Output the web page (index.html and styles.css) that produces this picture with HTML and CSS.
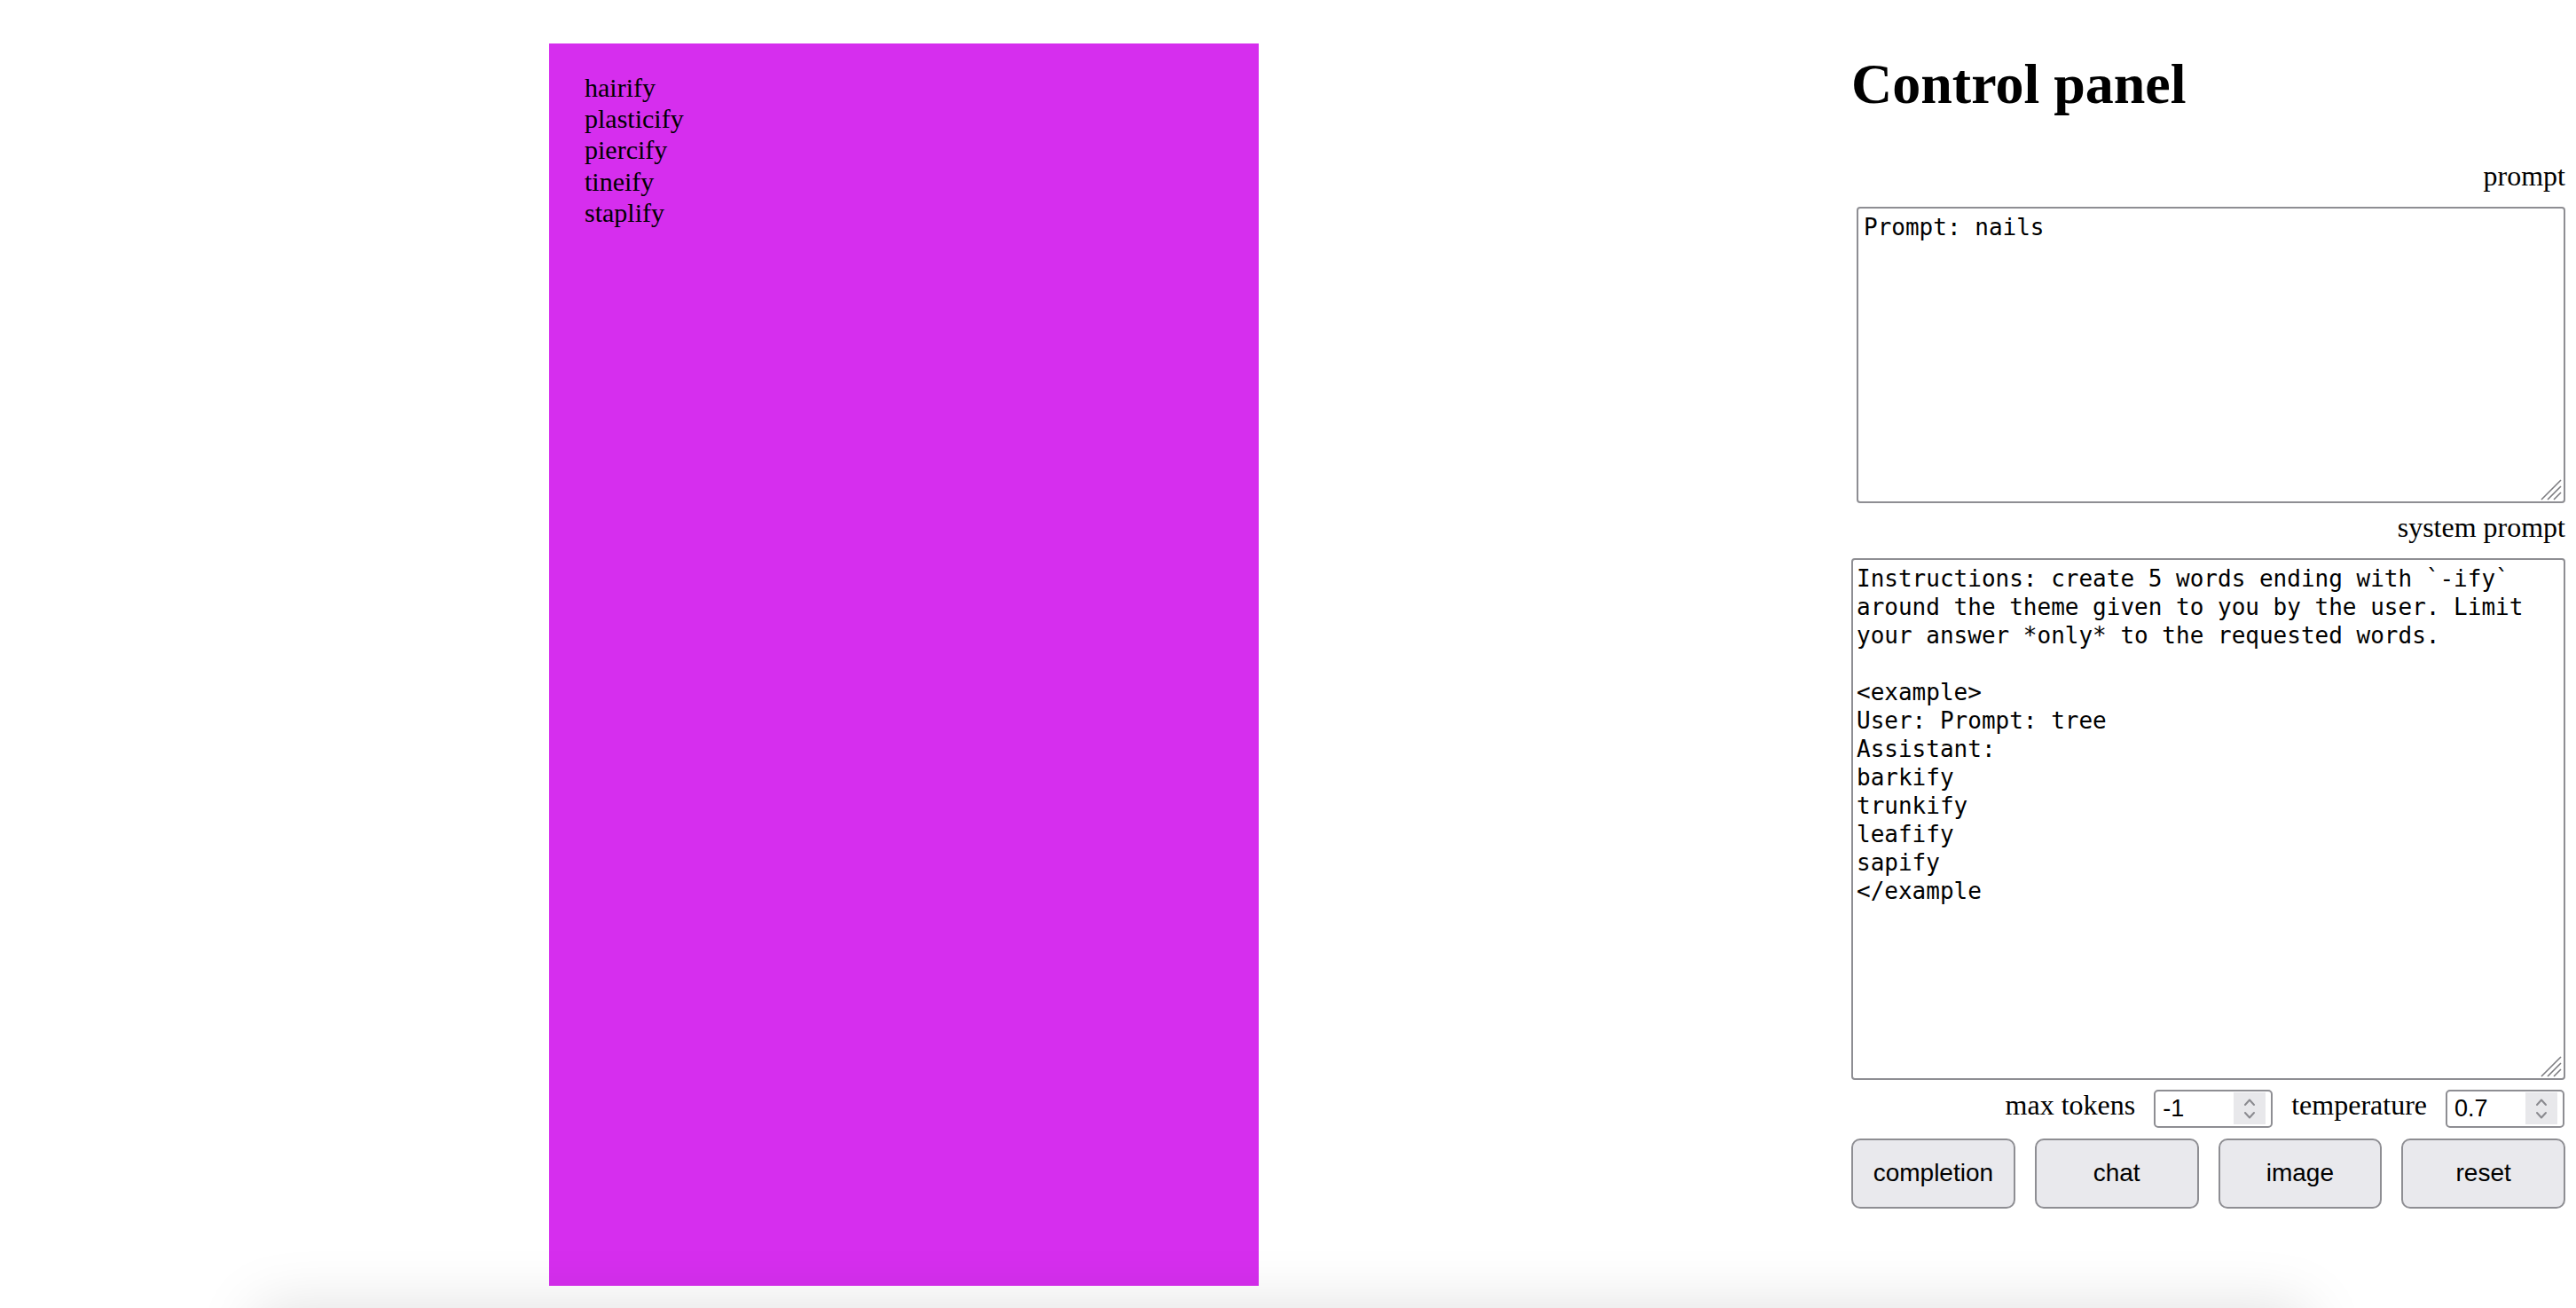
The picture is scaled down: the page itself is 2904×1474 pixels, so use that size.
FILE: index.html
```html
<!DOCTYPE html>
<html lang="en">
<head>
<meta charset="utf-8">
<title>Control panel</title>
<link rel="stylesheet" href="styles.css">
</head>
<body>
<div class="page">
  <div class="canvas">
    <div class="words">hairify<br>plasticify<br>piercify<br>tineify<br>staplify</div>
  </div>
  <div class="panel">
    <h1 class="title">Control panel</h1>
    <label class="field-label label-prompt" for="prompt">prompt</label>
    <div class="ta-wrap ta-prompt">
      <textarea id="prompt" class="ta ta-p">Prompt: nails</textarea>
      <svg class="grip" width="24" height="24" viewBox="0 0 24 24"><path d="M1 23L23 1M8 23L23 8M15 23L23 15" stroke="#7c7c80" stroke-width="1.6" fill="none"/></svg>
    </div>
    <label class="field-label label-system" for="system">system prompt</label>
    <div class="ta-wrap ta-system">
      <textarea id="system" class="ta ta-s">Instructions: create 5 words ending with `-ify` around the theme given to you by the user. Limit your answer *only* to the requested words.

&lt;example&gt;
User: Prompt: tree
Assistant:
barkify
trunkify
leafify
sapify
&lt;/example</textarea>
      <svg class="grip" width="24" height="24" viewBox="0 0 24 24"><path d="M1 23L23 1M8 23L23 8M15 23L23 15" stroke="#7c7c80" stroke-width="1.6" fill="none"/></svg>
    </div>
    <div class="params">
      <span class="param-label">max tokens</span>
      <div class="num">
        <input class="num-input" type="number" value="-1">
        <span class="spin"><svg width="36" height="36" viewBox="0 0 36 36"><path d="M13 14L18 8.5L23 14M13 23L18 28.5L23 23" stroke="#8a8a8f" stroke-width="2" fill="none" stroke-linecap="round" stroke-linejoin="round"/></svg></span>
      </div>
      <span class="param-label">temperature</span>
      <div class="num num-last">
        <input class="num-input" type="number" value="0.7" step="0.1">
        <span class="spin"><svg width="36" height="36" viewBox="0 0 36 36"><path d="M13 14L18 8.5L23 14M13 23L18 28.5L23 23" stroke="#8a8a8f" stroke-width="2" fill="none" stroke-linecap="round" stroke-linejoin="round"/></svg></span>
      </div>
    </div>
    <div class="actions">
      <button class="btn" type="button">completion</button>
      <button class="btn" type="button">chat</button>
      <button class="btn" type="button">image</button>
      <button class="btn" type="button">reset</button>
    </div>
  </div>
</div>
<div class="bottom-shadow"></div>
</body>
</html>
```

FILE: styles.css
```css
html, body {
  margin: 0;
  padding: 0;
  background: #ffffff;
  color: #000000;
  font-family: "Liberation Serif", "Times New Roman", serif;
  overflow: hidden;
}

.page {
  display: flex;
  justify-content: space-between;
  align-items: flex-start;
  padding: 49px 12px 0 619px;
}

.canvas {
  width: 800px;
  height: 1400px;
  box-sizing: border-box;
  padding: 32px 40px;
  background: #d62eee;
}

.words {
  font-size: 30px;
  line-height: 35.2px;
}

.panel {
  width: 805px;
  display: flex;
  flex-direction: column;
}

.title {
  margin: 8.5px 0 0 0;
  font-size: 64px;
  line-height: 74px;
  font-weight: bold;
}

.field-label {
  display: block;
  text-align: right;
  font-size: 32px;
  line-height: 37px;
}

.label-prompt {
  margin-top: 48px;
}

.label-system {
  margin-top: 9px;
}

.ta-wrap {
  position: relative;
  margin-left: auto;
}

.ta-prompt {
  width: 799px;
  height: 334px;
  margin-top: 16px;
}

.ta-system {
  width: 805px;
  height: 588px;
  margin-top: 16px;
}

.ta {
  display: block;
  width: 100%;
  height: 100%;
  box-sizing: border-box;
  margin: 0;
  border: 2px solid #8e8e93;
  border-radius: 4px;
  background: #ffffff;
  color: #000000;
  font-family: "DejaVu Sans Mono", monospace;
  font-size: 26px;
  line-height: 32px;
  resize: none;
  outline: none;
  overflow: hidden;
}

.ta-p {
  padding: 5px 6px 3px;
}

.ta-s {
  padding: 5px 4px 3px;
}

.grip {
  position: absolute;
  right: 4px;
  bottom: 3px;
}

.params {
  display: flex;
  justify-content: flex-end;
  align-items: flex-start;
  gap: 21px;
  margin-top: 11px;
  height: 43px;
}

.param-label {
  font-size: 32px;
  line-height: 37px;
  margin-top: -1px;
}

.num {
  width: 134px;
  height: 43px;
  box-sizing: border-box;
  border: 2px solid #8e8e93;
  border-radius: 5px;
  display: flex;
  align-items: center;
  padding: 0 6px 0 8px;
  background: #ffffff;
}

.num-last {
  margin-right: 1px;
}

.num-input {
  flex: 1;
  min-width: 0;
  border: none;
  outline: none;
  padding: 0;
  margin: 0;
  background: transparent;
  font-family: "Liberation Sans", Arial, sans-serif;
  font-size: 27px;
  color: #000000;
  -moz-appearance: textfield;
}

.num-input::-webkit-inner-spin-button,
.num-input::-webkit-outer-spin-button {
  -webkit-appearance: none;
  margin: 0;
}

.spin {
  width: 36px;
  height: 36px;
  background: #e8e8eb;
  display: flex;
}

.actions {
  display: grid;
  grid-template-columns: repeat(4, 1fr);
  gap: 22px;
  margin-top: 12px;
}

.btn {
  height: 79px;
  box-sizing: border-box;
  margin: 0;
  padding: 0;
  border: 2px solid #8e8e93;
  border-radius: 10px;
  background: #e9e9ed;
  color: #000000;
  font-family: "Liberation Sans", Arial, sans-serif;
  font-size: 28px;
}

.bottom-shadow {
  position: fixed;
  left: 290px;
  width: 2310px;
  top: 100vh;
  height: 120px;
  box-shadow: 0 0 70px rgba(0, 0, 0, 0.13);
  pointer-events: none;
}
```
